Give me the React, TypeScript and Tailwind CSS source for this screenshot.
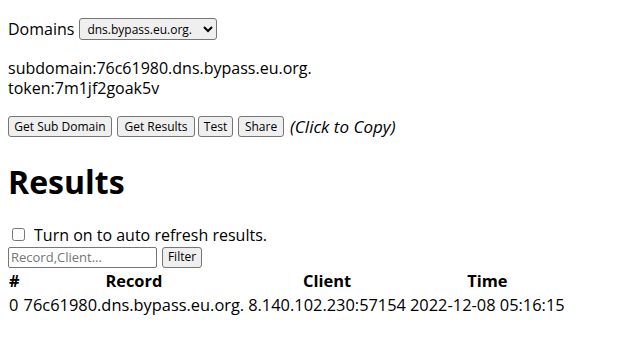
import * as React from "react"

const rows = [
  { id: 0, record: "76c61980.dns.bypass.eu.org.", client: "8.140.102.230:57154", time: "2022-12-08 05:16:15" },
]

export default function App() {
  const [auto, setAuto] = React.useState(false)
  const [filter, setFilter] = React.useState("")

  const btn = "h-[21px] px-0 text-[12px] leading-none bg-[#efefef] border border-[#767676] rounded-[3px] text-black"

  return (
    <div className="min-h-[342px] bg-white px-2 text-black text-[16px] font-['Open_Sans','Noto_Sans',sans-serif]">
      {/* Domain picker */}
      <div className="pt-[18px] flex items-center h-[40px]">
        <span>Domains</span>
        <select className="ml-[5px] w-[138px] h-[22px] pl-[3px] text-[12px] bg-[#efefef] border border-[#767676] rounded-[3px]">
          <option>dns.bypass.eu.org.</option>
        </select>
      </div>

      {/* Current session */}
      <div className="mt-[18px] leading-[20px]">
        <div>subdomain:76c61980.dns.bypass.eu.org.</div>
        <div>token:7m1jf2goak5v</div>
      </div>

      <div className="mt-[16px] flex items-center">
        <button className={`${btn} w-[104px]`}>Get Sub Domain</button>
        <button className={`${btn} w-[78px] ml-[5px]`}>Get Results</button>
        <button className={`${btn} w-[35px] ml-[3px]`}>Test</button>
        <button className={`${btn} w-[46px] ml-[5px]`}>Share</button>
        <span className="ml-[6px] italic text-[17px]">(Click to Copy)</span>
      </div>

      <h1 className="mt-[23px] text-[32px] font-bold leading-[37px]">Results</h1>

      <label className="mt-[28px] flex items-center h-[14px]">
        <input
          type="checkbox"
          checked={auto}
          onChange={e => setAuto(e.target.checked)}
          className="ml-[4px] mr-[9px] w-[13px] h-[13px]"
        />
        Turn on to auto refresh results.
      </label>

      <div className="mt-[5px] flex items-center gap-[5px]">
        <input
          value={filter}
          onChange={e => setFilter(e.target.value)}
          placeholder="Record,Client..."
          className="w-[149px] h-[21px] px-[2px] text-[13px] border border-[#767676] rounded-[2px] placeholder:text-[#757575]"
        />
        <button className={`${btn} w-[40px]`}>Filter</button>
      </div>

      <table className="border-separate border-spacing-[2px] -ml-[2px] text-[16.4px] leading-[20px]">
        <thead>
          <tr className="h-[22px]">
            <th className="text-left px-px">#</th>
            <th className="px-px">Record</th>
            <th className="px-px">Client</th>
            <th className="px-px">Time</th>
          </tr>
        </thead>
        <tbody>
          {rows.map(r => (
            <tr key={r.id} className="h-[22px]">
              <td className="px-px">{r.id}</td>
              <td className="px-px">{r.record}</td>
              <td className="px-px">{r.client}</td>
              <td className="px-px">{r.time}</td>
            </tr>
          ))}
        </tbody>
      </table>
    </div>
  )
}
